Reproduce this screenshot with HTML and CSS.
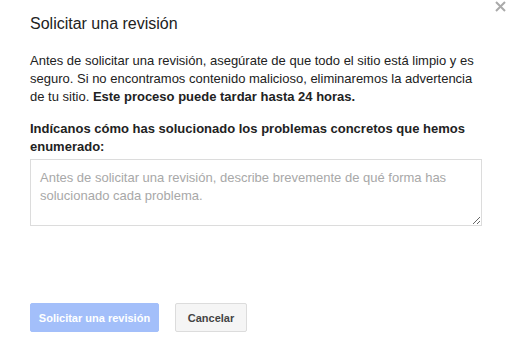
FILE: index.html
```html
<!DOCTYPE html>
<html lang="es">
<head>
    <meta charset="UTF-8">
    <meta name="viewport" content="width=device-width, initial-scale=1.0">
    <title>Solicitar una revisión</title>
    <link rel="stylesheet" href="styles.css">
</head>
<body>
    <div class="dialog">
        <button class="close" aria-label="Cerrar">
            <svg width="11" height="11" viewBox="0 0 11 11"><path d="M1 1L10 10M10 1L1 10" stroke="#aaa" stroke-width="2"/></svg>
        </button>
        <h1 class="title">Solicitar una revisión</h1>
        <p class="intro">Antes de solicitar una revisión, asegúrate de que todo el sitio está limpio y es seguro. Si no encontramos contenido malicioso, eliminaremos la advertencia de tu sitio. <b>Este proceso puede tardar hasta 24 horas.</b></p>
        <label class="label" for="details">Indícanos cómo has solucionado los problemas concretos que hemos enumerado:</label>
        <textarea id="details" class="details" placeholder="Antes de solicitar una revisión, describe brevemente de qué forma has solucionado cada problema."></textarea>
        <div class="actions">
            <button class="btn btn-primary" disabled>Solicitar una revisión</button>
            <button class="btn btn-default">Cancelar</button>
        </div>
    </div>
</body>
</html>
```

FILE: styles.css
```css
body {
    margin: 0;
    background: #fff;
    font-family: "Liberation Sans", Arial, sans-serif;
    color: #222;
}

.dialog {
    position: relative;
    width: 452px;
    padding: 14px 30px 0;
}

.close {
    position: absolute;
    top: 1px;
    right: 6px;
    width: 11px;
    height: 11px;
    padding: 0;
    border: none;
    background: none;
    cursor: pointer;
    display: flex;
}

.title {
    margin: 0 0 18px;
    font-size: 16px;
    line-height: 20px;
    font-weight: normal;
    color: #222;
}

.intro {
    margin: 0 0 14px;
    font-size: 13px;
    line-height: 18px;
}

.label {
    display: block;
    margin-bottom: 3px;
    font-size: 13px;
    line-height: 18px;
    font-weight: bold;
}

.details {
    display: block;
    box-sizing: border-box;
    width: 452px;
    height: 67px;
    margin: 0;
    padding: 9px 9px;
    border: 1px solid #dcdcdc;
    border-radius: 0;
    font-family: inherit;
    font-size: 13px;
    line-height: 18px;
    color: #222;
    outline: none;
}

.details::placeholder {
    color: #a8a8a8;
}

.actions {
    display: flex;
    gap: 16px;
    margin-top: 77px;
}

.btn {
    height: 29px;
    padding: 0;
    border-radius: 2px;
    font-family: inherit;
    font-size: 11px;
    font-weight: bold;
    white-space: nowrap;
}

.btn-primary {
    width: 129px;
    border: 1px solid #a3bffa;
    background: #a3bffa;
    color: #fff;
}

.btn-default {
    width: 72px;
    border: 1px solid #dcdcdc;
    background: #f5f5f5;
    color: #444;
    cursor: pointer;
}
```
